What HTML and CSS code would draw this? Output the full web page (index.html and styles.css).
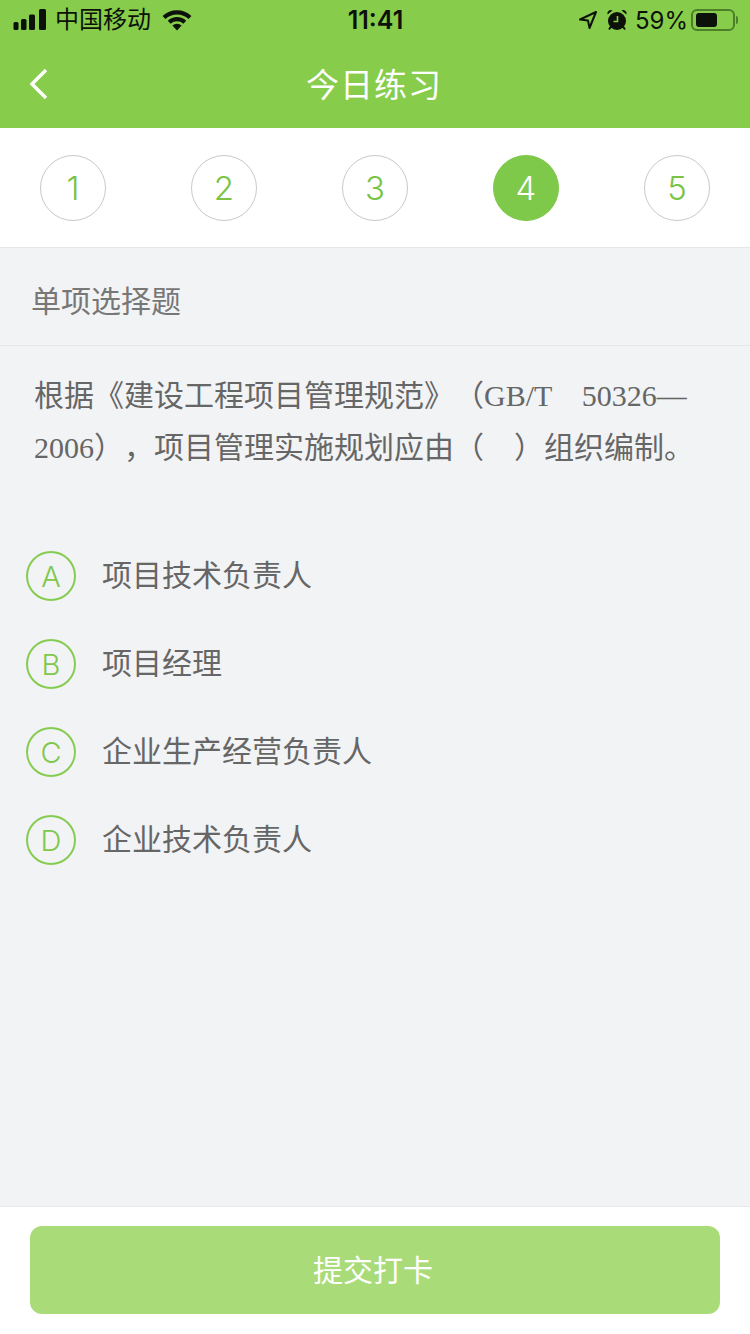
FILE: index.html
```html
<!DOCTYPE html>
<html lang="zh-CN">
<head>
    <meta charset="utf-8">
    <title>今日练习</title>
    <link rel="stylesheet" href="styles.css">
</head>
<body>
    <div class="top-bar">
        <div class="status-bar">
            <div class="status-left">
                <svg class="icon-signal" width="34" height="22" viewBox="0 0 34 22">
                    <rect x="0.5" y="13" width="5" height="8" rx="1.5"/>
                    <rect x="8" y="10" width="5.5" height="11" rx="1.5"/>
                    <rect x="16" y="5.5" width="6" height="15.5" rx="1.5"/>
                    <rect x="26" y="0" width="7" height="21" rx="1.5"/>
                </svg>
                <span class="carrier">中国移动</span>
                <svg class="icon-wifi" width="30" height="22" viewBox="0 0 30 22">
                    <path d="M2 8.5A19 19 0 0 1 28 8.5" fill="none" stroke="#0c120a" stroke-width="4.2"/>
                    <path d="M7.2 13.2A11.5 11.5 0 0 1 22.8 13.2" fill="none" stroke="#0c120a" stroke-width="4.2"/>
                    <path d="M15 21.5L10.4 16.6A6.6 6.6 0 0 1 19.6 16.6Z" fill="#0c120a"/>
                </svg>
            </div>
            <div class="status-time">11:41</div>
            <div class="status-right">
                <svg class="icon-location" width="20" height="20" viewBox="0 0 20 20">
                    <path d="M18 2L2 9.5L10 10.5L11.5 18Z" fill="none" stroke="#0c120a" stroke-width="2" stroke-linejoin="round"/>
                </svg>
                <svg class="icon-alarm" width="22" height="22" viewBox="0 0 22 22">
                    <path d="M1.5 5.5A3.5 3.5 0 0 1 6.5 1.5ZM20.5 5.5A3.5 3.5 0 0 0 15.5 1.5Z" fill="#0c120a"/>
                    <path d="M5 17.5L3 20.5M17 17.5L19 20.5" stroke="#0c120a" stroke-width="2"/>
                    <circle cx="11" cy="12" r="9" fill="#0c120a"/>
                    <path d="M11.5 7V12.5H7.5" fill="none" stroke="#87cd4b" stroke-width="1.6"/>
                </svg>
                <span class="battery-text">59%</span>
                <div class="battery">
                    <div class="battery-fill"></div>
                </div>
                <div class="battery-cap"></div>
            </div>
        </div>
        <div class="nav-bar">
            <button class="back-btn">
                <svg width="18" height="32" viewBox="0 0 18 32">
                    <path d="M16 2L2 16L16 30" fill="none" stroke="#fff" stroke-width="3.4"/>
                </svg>
            </button>
            <h2>今日练习</h2>
        </div>
    </div>

    <div class="steps">
        <div class="step">1</div>
        <div class="step">2</div>
        <div class="step">3</div>
        <div class="step active">4</div>
        <div class="step">5</div>
    </div>

    <div class="content">
        <div class="question-type">单项选择题</div>
        <p class="question">根据《建设工程项目管理规范》（GB/T　50326—2006），项目管理实施规划应由（　）组织编制。</p>

        <div class="options">
            <div class="option">
                <div class="option-letter">A</div>
                <div class="option-text">项目技术负责人</div>
            </div>
            <div class="option">
                <div class="option-letter">B</div>
                <div class="option-text">项目经理</div>
            </div>
            <div class="option">
                <div class="option-letter">C</div>
                <div class="option-text">企业生产经营负责人</div>
            </div>
            <div class="option">
                <div class="option-letter">D</div>
                <div class="option-text">企业技术负责人</div>
            </div>
        </div>
    </div>

    <div class="footer">
        <button class="submit-btn">提交打卡</button>
    </div>
</body>
</html>
```
FILE: styles.css
```css
* {
    box-sizing: border-box;
}
body {
    margin: 0;
    height: 1334px;
    display: flex;
    flex-direction: column;
    font-family: "Liberation Sans", "Noto Sans CJK SC", sans-serif;
    background-color: #f2f3f5;
    color: #666;
}
.top-bar {
    background-color: #87cd4b;
}
.status-bar {
    height: 40px;
    padding: 0 12px 0 13px;
    display: grid;
    grid-template-columns: 1fr auto 1fr;
    align-items: center;
    color: #0c120a;
    font-size: 24px;
}
.status-left {
    display: flex;
    align-items: center;
}
.icon-signal {
    fill: #0c120a;
}
.carrier {
    margin-left: 8px;
    line-height: 40px;
}
.icon-wifi {
    margin-left: 11px;
}
.status-time {
    font-family: Inter, "Liberation Sans", sans-serif;
    font-size: 25px;
    font-weight: 600;
}
.status-right {
    display: flex;
    align-items: center;
    justify-content: flex-end;
}
.icon-alarm {
    margin-left: 8px;
}
.battery-text {
    margin-left: 7px;
    font-family: Inter, "Liberation Sans", sans-serif;
    font-size: 24px;
}
.battery {
    width: 44px;
    height: 22px;
    margin-left: 3px;
    padding: 2px 3px;
    border: 2px solid #4d7f2a;
    border-radius: 6px;
}
.battery-fill {
    width: 21px;
    height: 100%;
    background-color: #0c120a;
    border-radius: 3px;
}
.battery-cap {
    width: 2px;
    height: 8px;
    margin-left: 1px;
    background-color: #4d7f2a;
    border-radius: 0 2px 2px 0;
}
.nav-bar {
    position: relative;
    height: 88px;
    display: flex;
    align-items: center;
    justify-content: center;
    padding: 0 2px 2px 0;
}
.nav-bar h2 {
    margin: 0;
    color: #fff;
    font-size: 33px;
    font-weight: 400;
    letter-spacing: 1px;
}
.back-btn {
    position: absolute;
    left: 30px;
    top: 28px;
    padding: 0;
    border: none;
    background: none;
    line-height: 0;
}
.steps {
    height: 120px;
    padding: 0 40px;
    display: flex;
    justify-content: space-between;
    align-items: center;
    background-color: #fff;
    border-bottom: 1px solid #e6e6e6;
}
.step {
    width: 66px;
    height: 66px;
    display: flex;
    align-items: center;
    justify-content: center;
    border: 1px solid #c9c9c9;
    border-radius: 50%;
    color: #7ac345;
    font-family: Inter, "Liberation Sans", sans-serif;
    font-size: 33px;
    font-weight: 350;
}
.step.active {
    background-color: #7ec84a;
    border-color: #7ec84a;
    color: #fff;
}
.content {
    flex: 1;
}
.question-type {
    height: 98px;
    padding: 4px 31px 0;
    display: flex;
    align-items: center;
    font-size: 30px;
    color: #777;
    border-bottom: 1px solid #e6e7ea;
}
.question {
    margin: 0;
    padding: 24px 34px 0;
    font-family: "Liberation Serif", "Noto Sans CJK SC", serif;
    font-size: 30px;
    line-height: 52px;
    text-spacing-trim: space-all;
}
.options {
    margin-top: 58px;
}
.option {
    height: 88px;
    padding-left: 26px;
    display: flex;
    align-items: center;
}
.option-letter {
    width: 50px;
    height: 50px;
    display: flex;
    align-items: center;
    justify-content: center;
    border: 2px solid #86cc52;
    border-radius: 50%;
    color: #7ec84a;
    font-family: Inter, "Liberation Sans", sans-serif;
    font-size: 29px;
    font-weight: 350;
}
.option-text {
    margin-left: 26px;
    margin-top: -6px;
    font-size: 30px;
}
.footer {
    height: 128px;
    padding: 19px 30px;
    background-color: #fff;
    border-top: 1px solid #e8e9ee;
}
.submit-btn {
    width: 100%;
    height: 88px;
    padding: 0 4px 4px 0;
    border: none;
    border-radius: 12px;
    background-color: #a9dc79;
    color: #fff;
    font-family: inherit;
    font-size: 30px;
}
```
